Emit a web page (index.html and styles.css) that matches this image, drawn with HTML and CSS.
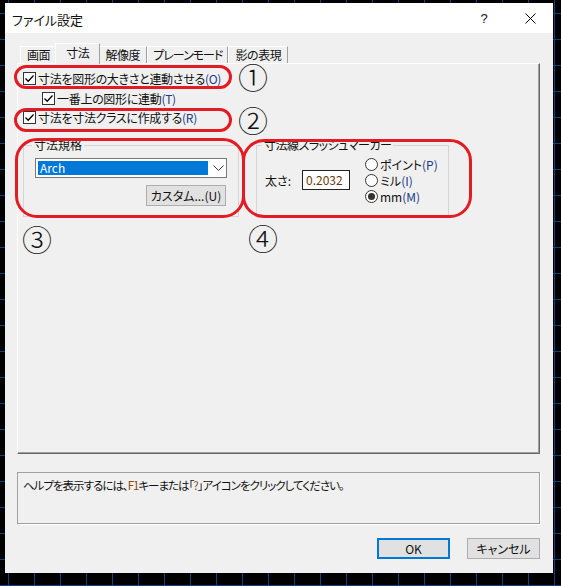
FILE: index.html
```html
<!DOCTYPE html>
<html>
<head>
<meta charset="utf-8">
<link rel="stylesheet" href="styles.css">
</head>
<body>

<div class="dialog">
  <div class="titlebar">
    <div class="title">ファイル設定</div>
    <div class="tb-btn">?</div>
    <div class="tb-btn">
      <svg width="11" height="11" viewBox="0 0 11 11"><path d="M0.5 0.5 L10.5 10.5 M10.5 0.5 L0.5 10.5" stroke="#000" stroke-width="1" fill="none"/></svg>
    </div>
  </div>

  <div class="client">
    <div class="tabs">
      <div class="tab">画面</div>
      <div class="tab active">寸法</div>
      <div class="tab">解像度</div>
      <div class="tab kana">プレーンモード</div>
      <div class="tab">影の表現</div>
    </div>

    <div class="panel">
      <div class="check">
        <span class="box"><svg width="11" height="11" viewBox="0 0 11 11"><path d="M1.5 5.5 L4.2 8.2 L9.5 2.5" stroke="#000" stroke-width="1.3" fill="none"/></svg></span>
        <span>寸法を図形の大きさと連動させる<span class="mn">(O)</span></span>
      </div>
      <div class="check sub">
        <span class="box"><svg width="11" height="11" viewBox="0 0 11 11"><path d="M1.5 5.5 L4.2 8.2 L9.5 2.5" stroke="#000" stroke-width="1.3" fill="none"/></svg></span>
        <span>一番上の図形に連動<span class="mn">(T)</span></span>
      </div>
      <div class="check">
        <span class="box"><svg width="11" height="11" viewBox="0 0 11 11"><path d="M1.5 5.5 L4.2 8.2 L9.5 2.5" stroke="#000" stroke-width="1.3" fill="none"/></svg></span>
        <span>寸法を寸法クラスに作成する<span class="mn">(R)</span></span>
      </div>

      <div class="groups">
        <fieldset class="group g1">
          <legend>寸法規格</legend>
          <div class="select">
            <span class="sel-text">Arch</span>
            <svg class="chev" width="11" height="7" viewBox="0 0 11 7"><path d="M0.5 0.5 L5.5 5.5 L10.5 0.5" stroke="#333" stroke-width="1" fill="none"/></svg>
          </div>
          <div class="btn-row"><div class="btn custom">カスタム...(U)</div></div>
        </fieldset>

        <fieldset class="group g2">
          <legend>寸法線スラッシュマーカー</legend>
          <div class="size-row">
            <span class="size-label">太さ:</span>
            <span class="field">0.2032</span>
            <div class="radios">
              <div class="radio"><span class="dot"></span><span>ポイント<span class="mn">(P)</span></span></div>
              <div class="radio"><span class="dot"></span><span>ミル<span class="mn">(I)</span></span></div>
              <div class="radio on"><span class="dot"></span><span>mm<span class="mn">(M)</span></span></div>
            </div>
          </div>
        </fieldset>
      </div>

      <div class="ring r1"></div>
      <div class="ring r2"></div>
      <div class="ring r3"></div>
      <div class="ring r4"></div>
      <div class="mark m1">①</div>
      <div class="mark m2">②</div>
      <div class="mark m3">③</div>
      <div class="mark m4">④</div>
    </div>

    <div class="help">ヘルプを表示するには、<span class="num">F1</span>キーまたは「<span class="num">?</span>」アイコンをクリックしてください。</div>

    <div class="actions">
      <div class="btn ok">OK</div>
      <div class="btn">キャンセル</div>
    </div>
  </div>
</div>

</body>
</html>
```

FILE: styles.css
```css
html, body {
  margin: 0;
}

body {
  width: 561px;
  height: 586px;
  overflow: hidden;
  padding: 3px 0 0 5px;
  box-sizing: border-box;
  background-color: #000;
  background-image:
    linear-gradient(to right, #0d4384 1px, transparent 1px),
    linear-gradient(to bottom, #0d4384 1px, transparent 1px);
  background-size: 26px 26px;
  background-position: 8px 13px;
  font-family: "Noto Sans CJK JP", sans-serif;
  font-size: 12px;
  font-feature-settings: "palt";
  color: #111;
}

.dialog {
  width: 548px;
  height: 570px;
  background-color: #f0f0f0;
  display: flex;
  flex-direction: column;
}

/* title bar */
.titlebar {
  height: 30px;
  background-color: #fff;
  display: flex;
  align-items: center;
  flex-shrink: 0;
}

.title {
  flex: 1;
  padding-left: 7px;
  font-size: 13px;
  padding-top: 2px;
}

.tb-btn {
  width: 46px;
  height: 30px;
  display: flex;
  align-items: center;
  justify-content: center;
  font-size: 13px;
  font-family: "Liberation Sans", sans-serif;
}

.client {
  padding: 0 13px 0 12px;
  display: flex;
  flex-direction: column;
}

/* tabs */
.tabs {
  display: flex;
  align-items: flex-end;
  height: 20px;
  margin-top: 10px;
  padding-left: 3px;
  position: relative;
  z-index: 2;
}

.tab {
  height: 17px;
  line-height: 16px;
  padding: 0 6px;
  box-sizing: border-box;
  border-top: 1px solid #fff;
  border-left: 1px solid #fff;
  border-right: 1px solid #a0a0a0;
  background-color: #f0f0f0;
  letter-spacing: -0.4px;
}

.tab.kana {
  padding: 0 5px;
  letter-spacing: -1px;
}

.tab.active {
  height: 21px;
  margin: 0 -2px -1px;
  padding: 1px 10px 0;
  z-index: 1;
}

/* page */
.panel {
  position: relative;
  height: 391px;
  box-sizing: border-box;
  border-top: 1px solid #fff;
  border-left: 1px solid #fff;
  border-right: 1px solid #696969;
  border-bottom: 1px solid #696969;
  box-shadow: inset -1px -1px 0 #a0a0a0;
  padding: 5px 0 0 5px;
}

.check {
  height: 19px;
  display: flex;
  align-items: center;
  gap: 2px;
  letter-spacing: -0.3px;
}

.check.sub {
  padding-left: 19px;
  height: 20px;
}

.box {
  width: 13px;
  height: 13px;
  box-sizing: border-box;
  border: 1px solid #333;
  background-color: #fff;
  display: flex;
  align-items: center;
  justify-content: center;
}

.mn {
  color: #1a3a86;
}

.num {
  color: #8a4a0a;
}

.groups {
  display: flex;
  gap: 17px;
  margin-top: 10px;
}

.group {
  margin: 0;
  padding: 0;
  box-sizing: border-box;
  height: 80px;
  border: 1px solid #d5d5d5;
  min-width: 0;
}

.group legend {
  padding: 0 2px;
  line-height: 16px;
}

.g1 {
  width: 216px;
  padding: 5px 11px 0;
}

.g1 legend {
  margin-left: -3px;
}

.g2 {
  width: 193px;
  padding: 3px 0 0 8px;
}

.g2 legend {
  margin-left: -3px;
  letter-spacing: -0.5px;
}

.select {
  width: 192px;
  height: 20px;
  box-sizing: border-box;
  border: 1px solid #7a7a7a;
  background-color: #fff;
  display: flex;
  align-items: center;
  padding: 2px;
}

.sel-text {
  width: 170px;
  height: 14px;
  line-height: 14px;
  background-color: #0078d7;
  color: #fff;
  padding-left: 2px;
  box-sizing: border-box;
}

.chev {
  margin-left: 5px;
}

.btn-row {
  display: flex;
  justify-content: flex-end;
  margin-top: 7px;
  padding-right: 1px;
}

.btn {
  height: 21px;
  box-sizing: border-box;
  border: 1px solid #adadad;
  background-color: #e1e1e1;
  display: flex;
  align-items: center;
  justify-content: center;
}

.custom {
  width: 80px;
}

.size-row {
  display: flex;
  align-items: center;
}

.size-label {
  width: 37px;
}

.field {
  width: 48px;
  height: 20px;
  box-sizing: border-box;
  border: 1px solid #222;
  background-color: #fff;
  line-height: 18px;
  padding-left: 3px;
  color: #6a3a08;
}

.radios {
  margin-left: 15px;
  display: flex;
  flex-direction: column;
}

.radio {
  height: 16px;
  display: flex;
  align-items: center;
  gap: 2px;
}

.dot {
  width: 13px;
  height: 13px;
  box-sizing: border-box;
  border: 1px solid #333;
  border-radius: 50%;
  background-color: #fff;
  display: flex;
  align-items: center;
  justify-content: center;
}

.radio.on .dot::after {
  content: "";
  width: 7px;
  height: 7px;
  border-radius: 50%;
  background-color: #333;
}

/* red annotations over the page */
.ring {
  position: absolute;
  box-sizing: border-box;
  border: 3px solid #e31b23;
}

.r1 { left: -4px; top: 1px; width: 218px; height: 24px; border-radius: 12px; }
.r2 { left: -4px; top: 44px; width: 218px; height: 24px; border-radius: 12px; }
.r3 { left: -3px; top: 74px; width: 230px; height: 80px; border-radius: 22px; }
.r4 { left: 224px; top: 75px; width: 230px; height: 79px; border-radius: 22px; }

.mark {
  position: absolute;
  width: 34px;
  height: 26px;
  line-height: 26px;
  text-align: center;
  font-size: 30px;
  font-weight: 300;
}

.m1 { left: 218px; top: -1px; }
.m2 { left: 218px; top: 42px; }
.m3 { left: 2px; top: 161px; }
.m4 { left: 228px; top: 160px; }

/* bottom */
.help {
  margin-top: 18px;
  height: 52px;
  box-sizing: border-box;
  border: 1px solid #a0a0a0;
  box-shadow: 1px 1px 0 #fff;
  padding: 4px 0 0 5px;
  line-height: 16px;
  font-size: 11.5px;
  letter-spacing: -1px;
}

.actions {
  display: flex;
  justify-content: flex-end;
  gap: 17px;
  margin-top: 14px;
}

.actions .btn {
  width: 73px;
}

.btn.ok {
  border: 2px solid #0078d7;
}
```
